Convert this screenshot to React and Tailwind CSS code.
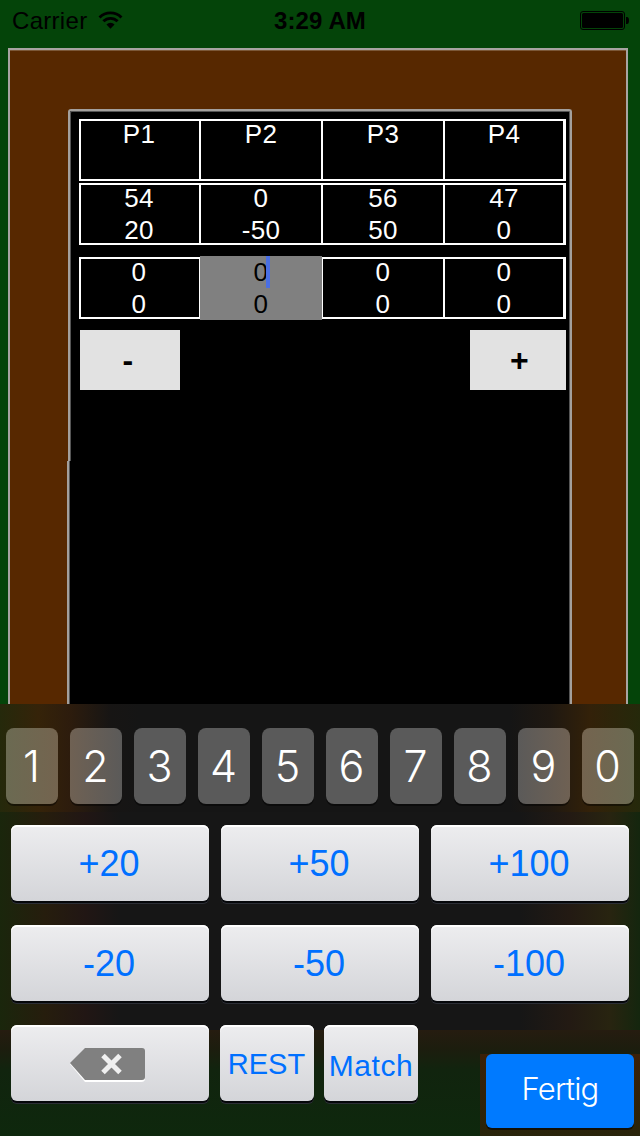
import React from 'react';

const scoreRows = [
  { gap: 'mt-[7px]', cells: [['P1'], ['P2'], ['P3'], ['P4']] },
  { gap: 'mt-[2px]', cells: [['54', '20'], ['0', '-50'], ['56', '50'], ['47', '0']] },
  { gap: 'mt-[12px]', active: 1, cells: [['0', '0'], ['0', '0'], ['0', '0'], ['0', '0']] },
];

const cellBorders = [
  'border-l-2 border-r-2 pr-[2px]',
  'border-r-2',
  'border-r-2',
  'border-r-3',
];

// outer keys pick up the brown of the table behind the keyboard
const digits = [
  { label: '1', bg: 'bg-linear-to-r from-[#6b6a52] to-[#74644f]' },
  { label: '2', bg: 'bg-linear-to-r from-[#6f6153] to-[#5b5a59]' },
  { label: '3', bg: 'bg-[#5a5a5a]' },
  { label: '4', bg: 'bg-[#5a5a5a]' },
  { label: '5', bg: 'bg-[#5a5a5a]' },
  { label: '6', bg: 'bg-[#5a5a5a]' },
  { label: '7', bg: 'bg-[#5a5a5a]' },
  { label: '8', bg: 'bg-[#5a5a5a]' },
  { label: '9', bg: 'bg-linear-to-r from-[#5b5a59] to-[#6f6153]' },
  { label: '0', bg: 'bg-linear-to-r from-[#74644f] to-[#6b6a52]' },
];

function StatusBar() {
  return (
    <div className="flex h-12 shrink-0 items-start justify-between pl-3 pr-[11px] text-[24px] leading-[42px] text-black">
      <div className="flex w-[200px] items-start">
        <span className="tracking-[0.3px]">Carrier</span>
        <svg className="ml-[11px] mt-[10px]" width="25" height="20" viewBox="0 0 26 20" fill="none" stroke="#000" strokeWidth="3">
          <path d="M1.6 7.3a16.2 16.2 0 0 1 22.8 0" />
          <path d="M5.6 11.4a10.5 10.5 0 0 1 14.8 0" />
          <path d="M13 19l-4.2-4.3a6 6 0 0 1 8.4 0z" fill="#000" stroke="none" />
        </svg>
      </div>
      <span className="-ml-px font-bold tracking-[0.1px]">3:29 AM</span>
      <div className="flex w-[200px] justify-end">
        <svg className="mt-[11px]" width="49" height="19" viewBox="0 0 49 19">
          <rect x="0.5" y="0.5" width="44" height="18" rx="2.5" fill="none" stroke="#000" />
          <rect x="2" y="2" width="41" height="15" rx="1.5" fill="#000" />
          <path d="M46 6h1q2 0 2 3.500t-2 3.500h-1z" fill="#000" />
        </svg>
      </div>
    </div>
  );
}

function ScoreRow({ row }) {
  return (
    <div className={`flex h-[62px] w-[487px] border-y-2 border-white ${row.gap}`}>
      {row.cells.map((lines, i) =>
        row.active === i ? (
          <div key={i} className="-ml-px -mt-[3px] h-16 w-[122px] shrink-0 bg-[#808080] text-black">
            <div className="relative h-8">
              {lines[0]}
              <div className="absolute left-[66px] top-0 h-8 w-1 bg-[#4a6fe3]" />
            </div>
            <div>{lines[1]}</div>
          </div>
        ) : (
          <div
            key={i}
            className={`h-[58px] shrink-0 border-white text-white ${cellBorders[i]} ${
              row.active + 1 === i ? 'w-[123px] border-l' : i === 3 ? 'w-[121px]' : 'w-[122px]'
            }`}
          >
            <div className="-mt-[3px]">
              {lines.map((line, n) => (
                <div key={n}>{line}</div>
              ))}
            </div>
          </div>
        )
      )}
    </div>
  );
}

function Board() {
  return (
    <div className="ml-2 h-[656px] w-[620px] shrink-0 overflow-hidden border-x-2 border-t-2 border-[#a8a4a2] bg-[#572800] pt-[59px] shadow-[inset_0_1px_0_#7c5838]">
      <div className="ml-[58px] flex h-[352px] w-[504px] flex-col rounded-t-[3px] border-x-2 border-t-2 border-[#a3a09d] bg-black pl-[9px] pt-px text-center text-[26px] leading-8 tracking-[0.3px] shadow-[inset_1px_1px_0_#555,inset_-1px_0_0_#555]">
        {scoreRows.map((row, i) => (
          <ScoreRow key={i} row={row} />
        ))}
        <div className="ml-px mt-[11px] flex w-[486px] justify-between text-[32px] font-bold leading-[60px] text-black">
          <div className="h-[60px] w-[100px] bg-[#e2e2e2] pr-1">-</div>
          <div className="h-[60px] w-24 bg-[#e2e2e2] pl-[3px]">+</div>
        </div>
      </div>
      <div className="ml-[57px] h-[250px] w-[505px] border-x-2 border-[#a3a09d] bg-black shadow-[inset_1px_0_0_#555,inset_-1px_0_0_#555]" />
    </div>
  );
}

function Key({ className, children }) {
  return (
    <div
      className={`flex h-[76px] items-center justify-center rounded-[6px] bg-linear-to-b from-[#ededef] to-[#d4d5d9] text-[#0070ff] shadow-[inset_0_2px_0_#fff,0_2px_0_#05070a,0_3px_0_#2c2e36] ${className}`}
    >
      {children}
    </div>
  );
}

function Keyboard() {
  return (
    <div className="flex h-[432px] shrink-0 flex-col bg-[#161616]">
      <div className="flex h-[108px] justify-between bg-[linear-gradient(90deg,#25290b_0,#352309_38px,#2d1c0d_70px,#171514_110px,#151515_140px,#151515_510px,#1f1811_550px,#332109_590px,#25290b_640px)] px-[6px] pt-6">
        {digits.map((d) => (
          <div
            key={d.label}
            className={`h-[76px] w-[52px] rounded-lg pr-px text-center font-['Inter',sans-serif] text-[43px] font-light leading-[77px] text-white shadow-[0_2px_0_rgba(0,0,0,0.45)] ${d.bg}`}
          >
            {d.label}
          </div>
        ))}
      </div>
      <div className="flex h-[218px] flex-col gap-6 bg-[linear-gradient(90deg,#1a260c_0,#261d0d_45px,#211614_85px,#161616_120px,#161616_520px,#231a13_570px,#282410_610px,#14260e_640px)] px-[11px] pt-[13px] text-[36px]">
        <div className="flex gap-3">
          <Key className="w-[198px] pr-[2px] pt-[2px]">+20</Key>
          <Key className="w-[198px] pr-[2px] pt-[2px]">+50</Key>
          <Key className="w-[198px] pr-[2px] pt-[2px]">+100</Key>
        </div>
        <div className="flex gap-3">
          <Key className="w-[198px] pr-[2px] pt-[2px]">-20</Key>
          <Key className="w-[198px] pr-[2px] pt-[2px]">-50</Key>
          <Key className="w-[198px] pr-[2px] pt-[2px]">-100</Key>
        </div>
      </div>
      <div className="flex h-[106px] bg-[linear-gradient(180deg,#261c10_0,#1d1d0e_18px,#11240e_40px,#0e280d_106px)]">
        <Key className="-mt-[5px] ml-[11px] w-[198px] pr-[4px]">
          <svg className="mt-[3px]" width="78" height="36" viewBox="0 0 78 36">
            <path d="M1 17L16 3h56q4 0 4 4v25q0 3-4 3H16z" fill="#fff" />
            <path d="M1 16L16 1h57q3 0 3 3v26q0 3-3 3H16z" fill="#808080" />
            <path d="M34 8.500l17 17M51 8.500l-17 17" stroke="#f0f0f0" strokeWidth="5" />
          </svg>
        </Key>
        <Key className="-mt-[5px] ml-[11px] w-[94px] pr-px pt-[4px] text-[29px]">REST</Key>
        <Key className="-mt-[5px] ml-[10px] w-[94px] pt-[4px] text-[30px] tracking-[0.6px]">Match</Key>
        <div className="ml-auto mt-6 h-[82px] w-40 bg-linear-to-b from-[#3b2008] to-[#29240a] pl-[6px]">
          <div className="h-[74px] w-[148px] rounded-[6px] bg-[#007aff] text-center font-['Inter',sans-serif] text-[31px] font-light leading-[70px] tracking-[-0.8px] text-white shadow-[0_2px_0_rgba(0,0,0,0.55)]">
            Fertig
          </div>
        </div>
      </div>
    </div>
  );
}

export default function App() {
  return (
    <div className="flex h-[1136px] w-[640px] flex-col overflow-hidden bg-[#044409] font-['Liberation_Sans',sans-serif]">
      <StatusBar />
      <Board />
      <Keyboard />
    </div>
  );
}
